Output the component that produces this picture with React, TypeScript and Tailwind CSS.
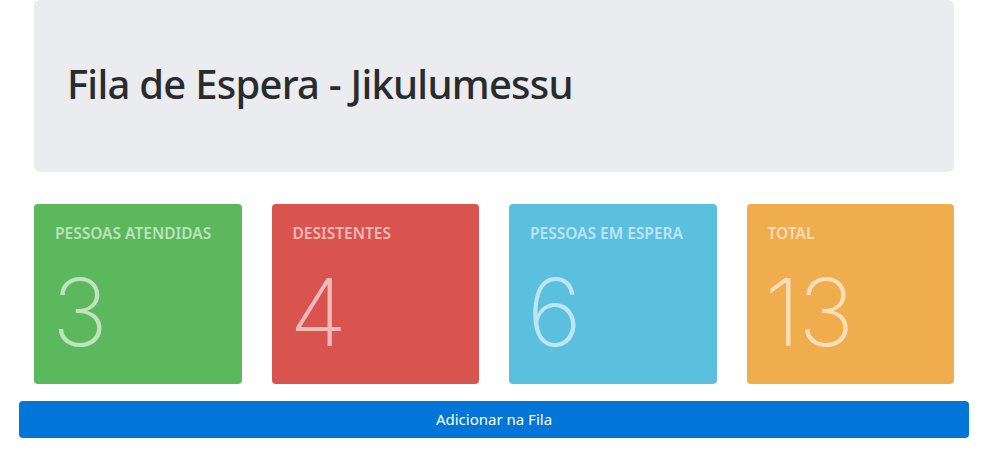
import React from "react";

const STATS = [
  { label: "PESSOAS ATENDIDAS", value: 3, bg: "bg-[#5cb85c]" },
  { label: "DESISTENTES", value: 4, bg: "bg-[#d9534f]" },
  { label: "PESSOAS EM ESPERA", value: 6, bg: "bg-[#5bc0de]" },
  { label: "TOTAL", value: 13, bg: "bg-[#f0ad4e]" },
];

export default function App() {
  return (
    <div className="min-h-screen bg-white px-[19px] font-['Noto_Sans','Open_Sans',sans-serif]">
      <div className="mx-[15px] h-[172px] rounded-md bg-[#eaecef] px-[33px] flex items-center">
        <h1 className="text-[40px] font-medium leading-none tracking-[-0.75px] text-[#292b2c] -mt-[4px]">
          Fila de Espera - Jikulumessu
        </h1>
      </div>

      <div className="mx-[15px] mt-[32px] grid grid-cols-4 gap-[30px]">
        {STATS.map(s => (
          <div key={s.label} className={`${s.bg} h-[180px] rounded-[4px] px-[21px] pt-[19px]`}>
            <div className="text-[15.5px] font-semibold leading-5 text-white/60">{s.label}</div>
            <div className="mt-[22px] -ml-[3px] text-[94px] font-extralight leading-none tracking-[-2px] text-white/60 font-['Inter',sans-serif]">
              {s.value}
            </div>
          </div>
        ))}
      </div>

      <button
        type="button"
        className="mt-[17px] w-full h-[37px] rounded-[4px] bg-[#0275d8] text-white text-[15px] leading-none"
      >
        Adicionar na Fila
      </button>
    </div>
  );
}
